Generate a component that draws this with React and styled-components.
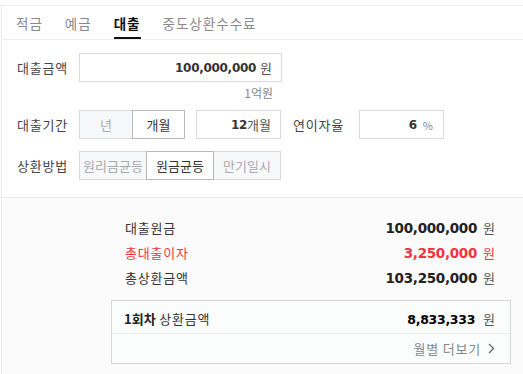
import styled, { createGlobalStyle } from "styled-components";

const GlobalStyle = createGlobalStyle`
  body {
    margin: 0;
    background: #ffffff;
    font-family: "Noto Sans CJK KR", "Noto Sans", sans-serif;
    letter-spacing: 0.8px;
  }
`;

const Wrapper = styled.div`
  margin: 5px 0 0 1px;
  border-top: 1px solid #ececec;
  border-left: 1px solid #ececec;
  min-height: 368px;
  background: #fbfbfb;
`;

const Tabs = styled.div`
  display: flex;
  gap: 22px;
  padding-left: 14px;
  height: 33px;
  border-bottom: 1px solid #ececec;
  background: #fff;
`;

const Tab = styled.div`
  display: flex;
  align-items: center;
  font-size: 13.5px;
  letter-spacing: 1px;
  color: ${(p) => (p.active ? "#111" : "#888")};
  font-weight: ${(p) => (p.active ? 700 : 400)};
  border-bottom: 2px solid ${(p) => (p.active ? "#111" : "transparent")};
  padding-top: 2px;
`;

const Form = styled.div`
  background: #fff;
  padding: 13px 0 17px 15px;
  border-bottom: 1px solid #ececec;
`;

const Row = styled.div`
  display: flex;
  align-items: center;
  height: 29px;
  margin-top: ${(p) => p.mt || 0}px;
`;

const Label = styled.div`
  width: 62px;
  font-size: 13px;
  color: #444;
  flex-shrink: 0;
`;

const Field = styled.div`
  box-sizing: border-box;
  width: ${(p) => p.w}px;
  height: 29px;
  border: 1px solid #d9d9d9;
  display: flex;
  align-items: center;
  justify-content: flex-end;
  padding-right: 9px;
  margin-left: ${(p) => p.ml || 0}px;
  background: #fff;
`;

const Num = styled.span`
  font-family: "DejaVu Sans", Verdana, sans-serif;
  font-weight: 700;
  font-size: ${(p) => p.size || 12}px;
  color: ${(p) => p.color || "#333"};
  letter-spacing: -0.3px;
`;

const Unit = styled.span`
  font-size: ${(p) => p.size || 13}px;
  color: ${(p) => p.color || "#555"};
  margin-left: ${(p) => p.gap ?? 4}px;
  letter-spacing: 0;
`;

const Hint = styled.div`
  width: 194px;
  text-align: right;
  font-size: 12px;
  color: #888;
  letter-spacing: 0;
  padding-top: 6px;
  line-height: 16px;
`;

const Segment = styled.div`
  display: flex;
  height: 29px;
`;

const SegItem = styled.div`
  box-sizing: border-box;
  width: ${(p) => p.w}px;
  height: 29px;
  display: flex;
  align-items: center;
  justify-content: center;
  font-size: 13px;
  letter-spacing: 0;
  border: 1px solid ${(p) => (p.active ? "#b9b9b9" : "#d9d9d9")};
  margin-left: -1px;
  position: relative;
  z-index: ${(p) => (p.active ? 1 : 0)};
  background: ${(p) => (p.active ? "#fff" : "#f6f8fa")};
  color: ${(p) => (p.active ? "#333" : "#aaa")};
  &:first-child {
    margin-left: 0;
  }
`;

const Result = styled.div`
  padding: 17px 12px 0 109px;
`;

const ResultRow = styled.div`
  display: flex;
  justify-content: space-between;
  align-items: center;
  height: 25px;
  padding: 0 16px 0 14px;
  font-size: 13px;
  color: ${(p) => p.color || "#333"};
`;

const Box = styled.div`
  margin-top: 10px;
  border: 1px solid #d6d6d6;
  background: #fbfcfc;
`;

const BoxRow = styled.div`
  display: flex;
  justify-content: space-between;
  align-items: center;
  height: 33px;
  padding: 3px 15px 0 12px;
  box-sizing: border-box;
  border-bottom: 1px solid #efefef;
  font-size: 13px;
  color: #333;
`;

const BoxTitle = styled.span`
  b {
    font-weight: 700;
    color: #222;
    letter-spacing: 0;
  }
`;

const More = styled.div`
  display: flex;
  justify-content: flex-end;
  align-items: center;
  gap: 7px;
  height: 29px;
  padding: 0 15px 0 0;
  font-size: 13px;
  color: #888;
`;

const Chevron = () => (
  <svg width="7" height="11" viewBox="0 0 7 11">
    <path d="M1 1l4.5 4.5L1 10" fill="none" stroke="#666" strokeWidth="1.3" />
  </svg>
);

export default function App() {
  return (
    <>
      <GlobalStyle />
      <Wrapper>
        <Tabs>
          <Tab>적금</Tab>
          <Tab>예금</Tab>
          <Tab active>대출</Tab>
          <Tab>중도상환수수료</Tab>
        </Tabs>
        <Form>
          <Row>
            <Label>대출금액</Label>
            <Field w={203}>
              <Num size={12}>100,000,000</Num>
              <Unit>원</Unit>
            </Field>
          </Row>
          <Row style={{ height: 16 }}>
            <Label />
            <Hint>1억원</Hint>
          </Row>
          <Row mt={12}>
            <Label>대출기간</Label>
            <Segment>
              <SegItem w={54}>년</SegItem>
              <SegItem w={53} active>개월</SegItem>
            </Segment>
            <Field w={85} ml={11}>
              <Num size={12}>12</Num>
              <Unit gap={0}>개월</Unit>
            </Field>
            <Label style={{ marginLeft: 12, width: 66 }}>연이자율</Label>
            <Field w={85} style={{ paddingRight: 10 }}>
              <Num size={12}>6</Num>
              <Unit size={11} color="#888" gap={6}>%</Unit>
            </Field>
          </Row>
          <Row mt={12}>
            <Label>상환방법</Label>
            <Segment>
              <SegItem w={68}>원리금균등</SegItem>
              <SegItem w={68} active>원금균등</SegItem>
              <SegItem w={68}>만기일시</SegItem>
            </Segment>
          </Row>
        </Form>
        <Result>
          <ResultRow>
            <span>대출원금</span>
            <span>
              <Num size={13.5} color="#222">100,000,000</Num>
              <Unit gap={6}>원</Unit>
            </span>
          </ResultRow>
          <ResultRow color="#f5333f">
            <span>총대출이자</span>
            <span>
              <Num size={13.5} color="#f5333f">3,250,000</Num>
              <Unit gap={6} color="#f5333f">원</Unit>
            </span>
          </ResultRow>
          <ResultRow>
            <span>총상환금액</span>
            <span>
              <Num size={13.5} color="#222">103,250,000</Num>
              <Unit gap={6}>원</Unit>
            </span>
          </ResultRow>
          <Box>
            <BoxRow>
              <BoxTitle>
                <b>1회차</b> 상환금액
              </BoxTitle>
              <span>
                <Num size={12.5} color="#000">8,833,333</Num>
                <Unit gap={8}>원</Unit>
              </span>
            </BoxRow>
            <More>
              월별 더보기 <Chevron />
            </More>
          </Box>
        </Result>
      </Wrapper>
    </>
  );
}
